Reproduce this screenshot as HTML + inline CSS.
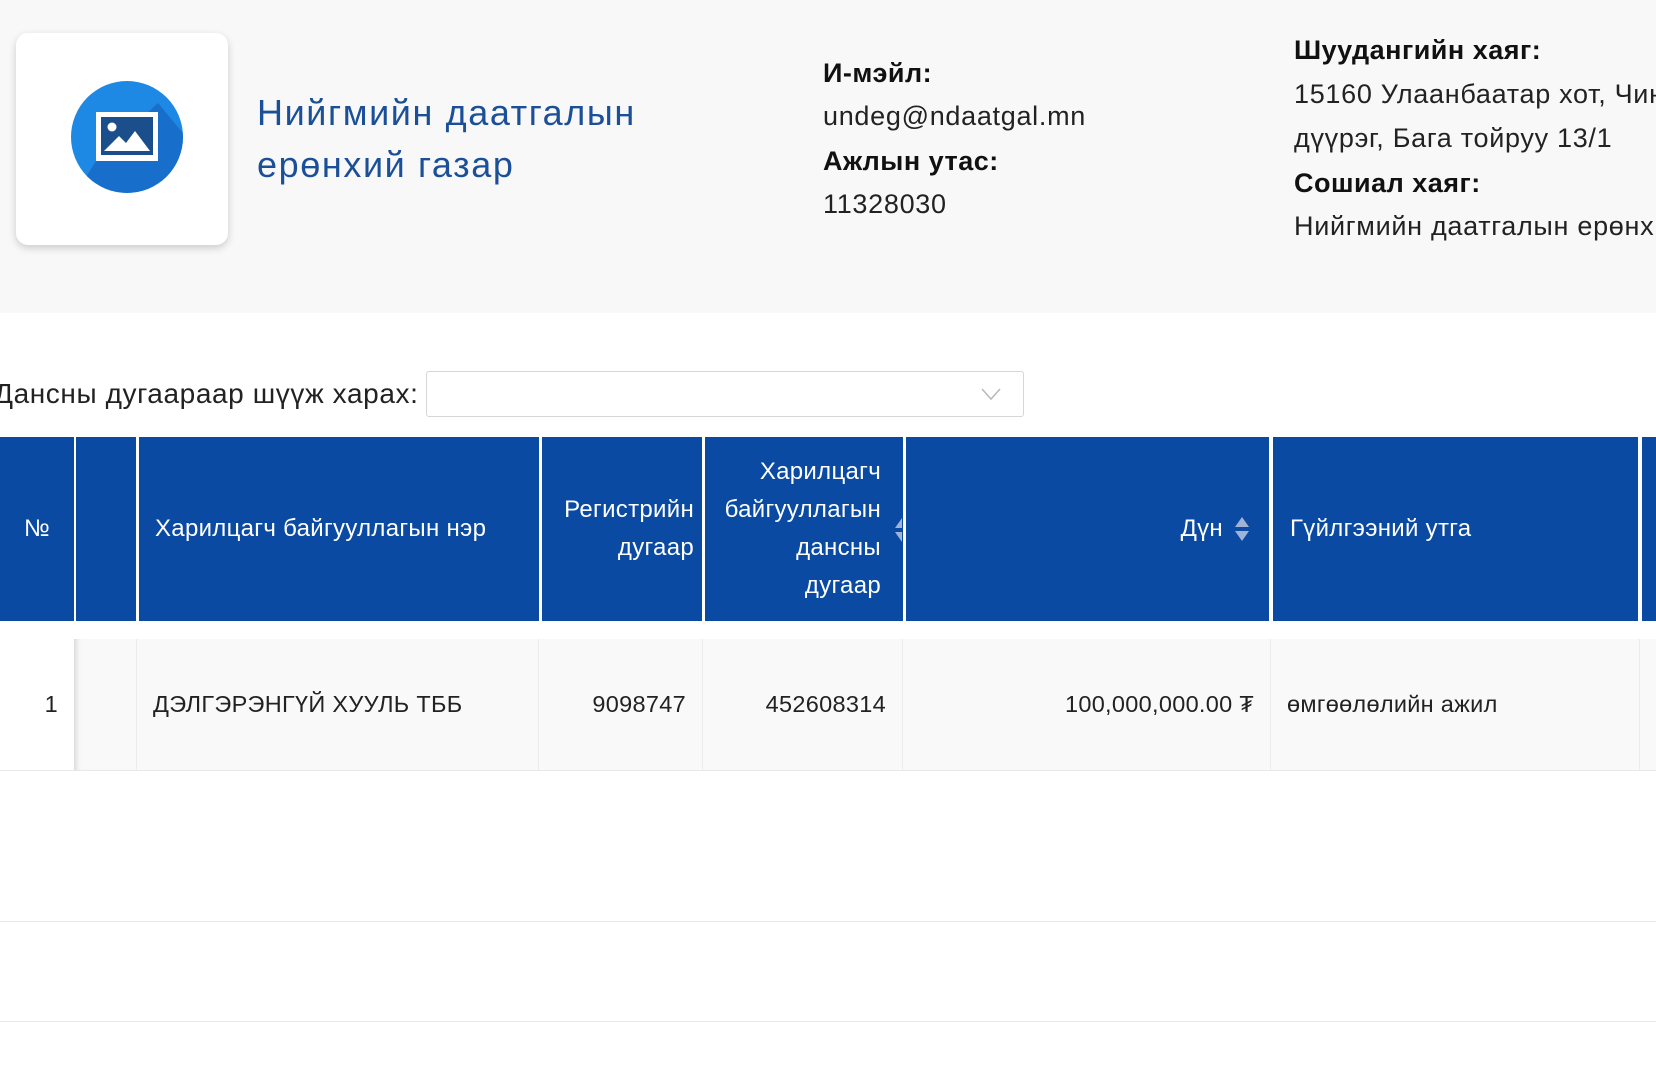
<!DOCTYPE html>
<html><head><meta charset="utf-8"><style>
*{margin:0;padding:0;box-sizing:border-box}
html,body{width:1656px;height:1068px;overflow:hidden}
body{background:#fff;font-family:"Liberation Sans","DejaVu Sans",sans-serif;color:#222}
#w{position:relative;width:1656px;height:1068px;overflow:hidden}
.hdr{position:absolute;left:0;top:0;width:1656px;height:313px;background:#f8f8f8}
.card{position:absolute;left:16px;top:33px;width:212px;height:212px;background:#fff;border-radius:12px;box-shadow:0 3px 8px rgba(0,0,0,.18)}
.t{position:absolute;white-space:nowrap}
.title{left:257px;color:#1b4f98;font-size:36px;letter-spacing:1.6px;line-height:52px;top:87px}
.lab{font-weight:bold;font-size:27px;letter-spacing:0.5px;color:#111}
.val{font-size:27px;letter-spacing:0.7px;color:#222}
.th{position:absolute;top:437px;height:184px;background:#0a4aa2;color:#fff;font-size:24px;letter-spacing:0.3px;line-height:38px;display:flex;align-items:center;padding:0 14px}
.td{position:absolute;top:639px;height:131px;background:#f9f9f9;border-right:1px solid #ececec;font-size:23.5px;letter-spacing:0.3px;color:#222;display:flex;align-items:center;padding:0 16px}
.line{position:absolute;left:0;width:1656px;height:1px;background:#e8e8e8}
</style></head><body><div id="w">
<div class="hdr"></div>
<div class="card">
<svg width="212" height="212" viewBox="0 0 212 212">
<defs><clipPath id="c"><circle cx="111" cy="104" r="56"/></clipPath></defs>
<circle cx="111" cy="104" r="56" fill="#1e88e5"/>
<polygon points="80,128 142,70 200,140 130,200 60,160" fill="#1565c0" clip-path="url(#c)" opacity=".7"/>
<rect x="80" y="79" width="62" height="49" fill="#fff"/>
<rect x="85" y="84" width="52" height="38" fill="#1a4f8c"/>
<circle cx="96" cy="94" r="4.5" fill="#fff"/>
<polygon points="88,118 103,103 110,110 119,98 134,118" fill="#fff"/>
</svg>
</div>
<div class="t title">Нийгмийн даатгалын<br>ерөнхий газар</div>

<div class="t lab" style="left:823px;top:58px">И-мэйл:</div>
<div class="t val" style="left:823px;top:101px">undeg@ndaatgal.mn</div>
<div class="t lab" style="left:823px;top:146px">Ажлын утас:</div>
<div class="t val" style="left:823px;top:189px">11328030</div>

<div class="t lab" style="left:1294px;top:35px">Шуудангийн хаяг:</div>
<div class="t val" style="left:1294px;top:79px;width:362px;overflow:hidden">15160 Улаанбаатар хот, Чингэлтэй</div>
<div class="t val" style="left:1294px;top:123px">дүүрэг, Бага тойруу 13/1</div>
<div class="t lab" style="left:1294px;top:168px">Сошиал хаяг:</div>
<div class="t val" style="left:1294px;top:211px;width:362px;overflow:hidden">Нийгмийн даатгалын ерөнхий газар</div>

<div class="t" style="left:-6px;top:378px;font-size:28px;letter-spacing:0.6px;color:#222">Дансны дугаараар шүүж харах:</div>
<div style="position:absolute;left:426px;top:371px;width:598px;height:46px;border:1px solid #d6d6d6;border-radius:3px;background:#fff"></div>
<svg style="position:absolute;left:980px;top:386px" width="22" height="16" viewBox="0 0 22 16"><path d="M2 3 L11 13 L20 3" fill="none" stroke="#bbb" stroke-width="1.6"/></svg>

<div class="th" style="left:0;width:74px;justify-content:center">№</div>
<div class="th" style="left:76px;width:60px"></div>
<div class="th" style="left:139px;width:400px;padding-left:16px">Харилцагч байгууллагын нэр</div>
<div class="th" style="left:542px;width:160px;text-align:right;justify-content:flex-end;padding-right:8px">Регистрийн<br>дугаар</div>
<div class="th" style="left:705px;width:198px;text-align:right;justify-content:flex-end;padding-right:22px">Харилцагч<br>байгууллагын<br>дансны<br>дугаар</div>
<svg style="position:absolute;left:893px;top:516px" width="10" height="28" viewBox="0 0 10 28"><path d="M9 2 L2 12 L9 12Z M9 16 L2 16 L9 26Z" fill="#9fb3d6"/></svg>
<div class="th" style="left:906px;width:363px;justify-content:flex-end;padding-right:46px">Дүн</div>
<svg style="position:absolute;left:1233px;top:515px" width="18" height="28" viewBox="0 0 18 28"><path d="M9 2 L16 12 L2 12Z M2 16 L16 16 L9 26Z" fill="#9fb3d6"/></svg>
<div class="th" style="left:1273px;width:365px;padding-left:17px">Гүйлгээний утга</div>
<div class="th" style="left:1642px;width:14px"></div>

<div class="td" style="left:0;width:74px;background:#fff;border:none;justify-content:flex-end;padding-right:16px">1</div>
<div class="td" style="left:74px;width:63px;box-shadow:inset 6px 0 6px -4px rgba(0,0,0,.15)"></div>
<div class="td" style="left:137px;width:402px">ДЭЛГЭРЭНГҮЙ ХУУЛЬ ТББ</div>
<div class="td" style="left:539px;width:164px;justify-content:flex-end">9098747</div>
<div class="td" style="left:703px;width:200px;justify-content:flex-end">452608314</div>
<div class="td" style="left:903px;width:368px;justify-content:flex-end">100,000,000.00 ₮</div>
<div class="td" style="left:1271px;width:369px">өмгөөлөлийн ажил</div>
<div class="td" style="left:1640px;width:16px"></div>
<div class="line" style="top:770px"></div>
<div class="line" style="top:921px"></div>
<div class="line" style="top:1021px"></div>
</div></body></html>
